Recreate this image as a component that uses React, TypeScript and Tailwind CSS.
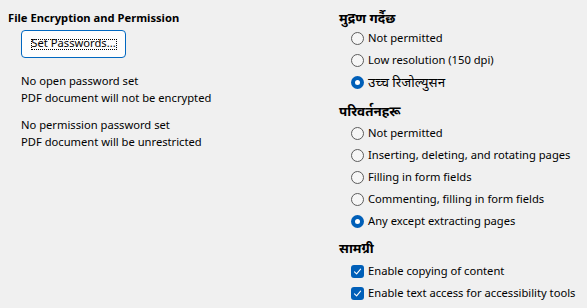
import React from "react";

const font = { fontFamily: '"Segoe UI", "Noto Sans", "Noto Sans Devanagari", sans-serif' };

function Radio({ label, checked, deva }: { label: string; checked?: boolean; deva?: boolean }) {
  return (
    <div className="flex h-[22px] items-center pl-[12px]">
      {checked ? (
        <span className="flex h-[13px] w-[13px] shrink-0 items-center justify-center rounded-full bg-[#005fb8]">
          <span className="h-[5px] w-[5px] rounded-full bg-white" />
        </span>
      ) : (
        <span className="h-[13px] w-[13px] shrink-0 rounded-full border border-[#5c5c5c] bg-[#f6f6f6]" />
      )}
      <span className={deva ? "ml-[4px] whitespace-nowrap text-[13.4px]" : "ml-[4px] whitespace-nowrap"}>{label}</span>
    </div>
  );
}

function Check({ label }: { label: string }) {
  return (
    <div className="flex h-[22px] items-center pl-[12px]">
      <span className="flex h-[13px] w-[13px] items-center justify-center rounded-[3px] bg-[#005fb8]">
        <svg width="9" height="9" viewBox="0 0 9 9">
          <path d="M1.5 4.8 L3.6 6.8 L7.6 2.2" fill="none" stroke="white" strokeWidth="1.1" strokeLinecap="round" strokeLinejoin="round" />
        </svg>
      </span>
      <span className="ml-[4px] whitespace-nowrap">{label}</span>
    </div>
  );
}

export default function App() {
  return (
    <div
      className="flex h-[308px] w-[587px] bg-[#f0f0f0] pt-[10px] text-[11.2px] leading-[16px] text-black"
      style={font}
    >
      <div className="w-[339px] shrink-0 pl-[8px]">
        <div className="font-bold">File Encryption and Permission</div>
        <div className="ml-[13px] mt-[4px] flex h-[28px] w-[105px] items-center justify-center rounded-[4px] border border-[#0067c0] bg-[#fdfdfd]">
          <span className="flex h-[11px] w-[86px] items-center justify-center border border-dotted border-black">
            <span className="relative top-[-1px] whitespace-nowrap">Set Passwords...</span>
          </span>
        </div>
        <div className="ml-[13px] mt-[14px] leading-[17px]">
          <div>No open password set</div>
          <div>PDF document will not be encrypted</div>
        </div>
        <div className="ml-[13px] mt-[10px] leading-[17px]">
          <div>No permission password set</div>
          <div>PDF document will be unrestricted</div>
        </div>
      </div>
      <div className="flex-1">
        <div className="h-[16px] text-[13.4px] font-bold leading-[16px]">मुद्रण गर्दैछ</div>
        <div className="mt-[1px]">
          <Radio label="Not permitted" />
          <Radio label="Low resolution (150 dpi)" />
          <Radio label="उच्च रिजोल्युसन" checked deva />
        </div>
        <div className="mt-[10px] h-[16px] text-[13.4px] font-bold leading-[16px]">परिवर्तनहरू</div>
        <div className="mt-[3px]">
          <Radio label="Not permitted" />
          <Radio label="Inserting, deleting, and rotating pages" />
          <Radio label="Filling in form fields" />
          <Radio label="Commenting, filling in form fields" />
          <Radio label="Any except extracting pages" checked />
        </div>
        <div className="mt-[8px] h-[16px] text-[13.4px] font-bold leading-[16px]">सामग्री</div>
        <div className="mt-[4px]">
          <Check label="Enable copying of content" />
          <Check label="Enable text access for accessibility tools" />
        </div>
      </div>
    </div>
  );
}
